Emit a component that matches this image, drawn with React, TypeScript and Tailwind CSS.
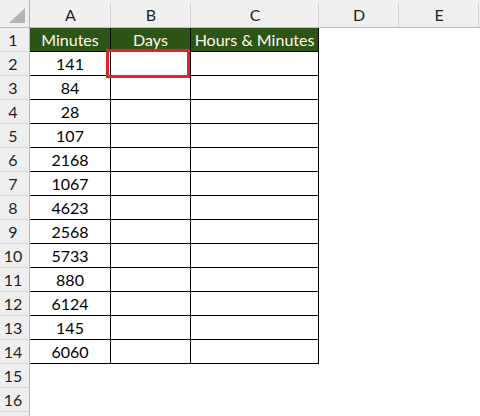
import React from 'react';

const minutes = [141, 84, 28, 107, 2168, 1067, 4623, 2568, 5733, 880, 6124, 145, 6060];
const colLetters = ['A', 'B', 'C', 'D', 'E'];

const font = { fontFamily: 'Lato, "Open Sans", sans-serif' };

function ColHeader({ label }: { label: string }) {
  return (
    <div className="relative flex h-[28px] items-center justify-center border-b border-[#bdbdbd] bg-[#efefef] pt-[2px] text-[16px] text-[#1f1f1f] after:absolute after:right-0 after:top-[4px] after:bottom-0 after:w-px after:bg-[#cfcfcf]">
      {label}
    </div>
  );
}

function RowHeader({ n }: { n: number }) {
  return (
    <div className="flex h-[24px] items-center justify-center border-r border-b border-r-[#b5b5b5] border-b-[#d6d6d6] bg-[#efefef] pr-[3px] text-[16px] text-[#1f1f1f]">
      {n < 17 ? n : ''}
    </div>
  );
}

export default function App() {
  const rows = Array.from({ length: 17 }, (_, i) => i + 1);

  return (
    <div className="h-[416px] w-[480px] overflow-hidden bg-white" style={font}>
      <div className="grid grid-cols-[30px_81px_80px_128px_80px_80px_1fr]">
        {/* corner */}
        <div className="relative h-[28px] border-r border-b border-r-[#b5b5b5] border-b-[#bdbdbd] bg-[#efefef]">
          <div className="absolute right-[4px] bottom-[4px] h-0 w-0 border-b-[15px] border-l-[16px] border-b-[#b4b4b4] border-l-transparent" />
        </div>
        {colLetters.map((c) => (
          <ColHeader key={c} label={c} />
        ))}
        <div className="h-[28px] border-b border-[#bdbdbd] bg-[#efefef]" />

        {rows.map((r) => {
          const inTable = r <= 14;
          const isHead = r === 1;
          const cellBase = 'flex h-[24px] items-center justify-center text-[16px]';
          const tableCell = isHead
            ? `${cellBase} bg-[#2e5418] text-[#fffbe8] border-r border-b border-black`
            : `${cellBase} bg-white text-black border-r border-b border-black`;
          return (
            <React.Fragment key={r}>
              <RowHeader n={r} />
              {inTable ? (
                <>
                  <div className={tableCell}>{isHead ? 'Minutes' : minutes[r - 2]}</div>
                  <div className={r === 2 ? `${tableCell} relative` : tableCell}>
                    {isHead ? 'Days' : ''}
                    {r === 2 && (
                      <div className="absolute left-[-5px] top-[-3px] z-10 h-[29px] w-[84px] border-[3px] border-solid border-[#e3222b]" />
                    )}
                  </div>
                  <div className={tableCell}>{isHead ? 'Hours & Minutes' : ''}</div>
                </>
              ) : (
                <>
                  <div className="h-[24px]" />
                  <div className="h-[24px]" />
                  <div className="h-[24px]" />
                </>
              )}
              <div className="h-[24px]" />
              <div className="h-[24px]" />
              <div className="h-[24px]" />
            </React.Fragment>
          );
        })}
      </div>
    </div>
  );
}
